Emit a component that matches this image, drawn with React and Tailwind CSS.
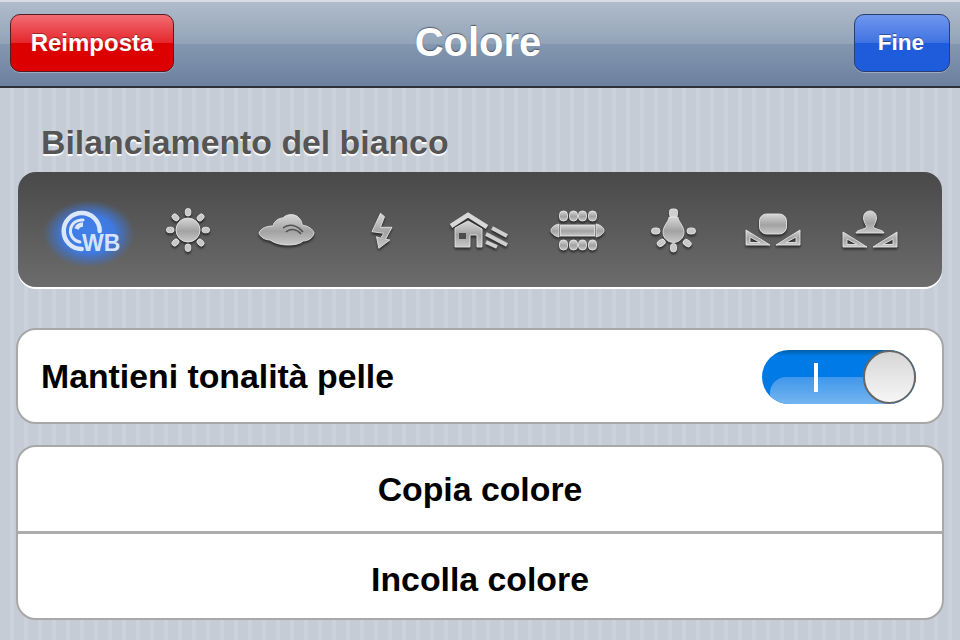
const metal = "url(#metal)";

function Icon({ children }) {
  return (
    <svg viewBox="0 0 60 60" className="w-[60px] h-[60px] overflow-visible drop-shadow-[0_2px_1px_rgba(0,0,0,0.55)]">
      <g stroke="#e4e4e4" strokeWidth="0.9">{children}</g>
    </svg>
  );
}

function WbIcon() {
  return (
    <svg viewBox="0 0 60 60" className="w-[60px] h-[60px] overflow-visible">
      <defs>
        <linearGradient id="metal" x1="0" y1="0" x2="0" y2="1">
          <stop offset="0" stopColor="#d6d6d6" />
          <stop offset="0.55" stopColor="#a2a2a2" />
          <stop offset="1" stopColor="#c8c8c8" />
        </linearGradient>
        <radialGradient id="glow">
          <stop offset="0" stopColor="#4180ea" />
          <stop offset="0.55" stopColor="#3f7ae2" />
          <stop offset="0.8" stopColor="#4272c4" stopOpacity="0.55" />
          <stop offset="1" stopColor="#4a6ea8" stopOpacity="0" />
        </radialGradient>
      </defs>
      <ellipse cx="29" cy="34" rx="46" ry="34" fill="url(#glow)" />
      <g fill="none" stroke="#dbe7fb" strokeLinecap="round">
        <path d="M39.700 31A18 18 0 1 0 21.700 49" strokeWidth="4.500" />
        <path d="M23 20A11 11 0 0 0 20 42" strokeWidth="3" />
        <path d="M23 24.500A7 7 0 0 0 16.500 29" strokeWidth="4.500" strokeLinecap="butt" />
      </g>
      <text x="22" y="50.500" fill="#d6e4fb" fontSize="23" fontWeight="700" fontFamily="'Liberation Sans', sans-serif">WB</text>
    </svg>
  );
}

function SunIcon() {
  const rays = [0, 45, 90, 135, 180, 225, 270, 315];
  return (
    <Icon>
      {rays.map((a) => (
        <rect key={a} x="27.300" y="8.500" width="5.500" height="7.500" rx="2.700" fill="#c8c8c8" transform={`rotate(${a} 30 30)`} />
      ))}
      <circle cx="30" cy="30" r="12" fill={metal} />
    </Icon>
  );
}

function CloudIcon() {
  return (
    <Icon>
      <path d="M4 33C6 28 12 26 18 26C19 21 24 18 28 18C31 14 40 13 44 18C46 20 47 22 47 25C53 26 58 29 59 33C58 38 53 41 48 41C44 46 24 47 15 40C10 40 5 37 4 33Z" fill={metal} />
      <path d="M28 28C34 23 42 25 48 32M31 32C35 28 42 29 46 34" fill="none" stroke="#4f4f4f" strokeWidth="1.500" />
    </Icon>
  );
}

function FlashIcon() {
  return (
    <Icon>
      <path d="M27.500 13.300L31.500 16.700L27.500 27.300H39L32.500 39.300L36.800 40L25.800 48.300L23.500 36.700L27.500 38.300L30.800 33.300L19 31.700Z" fill={metal} />
    </Icon>
  );
}

function HouseIcon() {
  return (
    <Icon>
      <path d="M1 26L18 15L37 27" fill="none" stroke="#d8d8d8" strokeWidth="4.500" />
      <path d="M5 28L18 21L32 29V47H27V35H20V47H5Z" fill={metal} />
      <rect x="9" y="33" width="7" height="6" fill="#4c4c4c" stroke="none" />
      <path d="M42 28L57 36M36 34L57 45M36 42L47 47" fill="none" stroke="#cfcfcf" strokeWidth="4" />
    </Icon>
  );
}

function TableIcon() {
  const xs = [15.5, 25.5, 34.5, 44.5];
  return (
    <Icon>
      {xs.map((x) => (
        <rect key={`t${x}`} x={x - 4} y="11" width="8" height="10" rx="3.800" fill={metal} />
      ))}
      {xs.map((x) => (
        <rect key={`b${x}`} x={x - 4} y="40" width="8" height="10" rx="3.800" fill={metal} />
      ))}
      <rect x="12.500" y="25" width="34" height="11" fill={metal} />
      <path d="M11 24V37C6 36 3 33 3 30.500C3 28 6 25 11 24Z" fill={metal} />
      <path d="M48 24V37C53 36 56 33 56 30.500C56 28 53 25 48 24Z" fill={metal} />
    </Icon>
  );
}

function BulbIcon() {
  return (
    <Icon>
      <rect x="24.500" y="9" width="8" height="8" rx="2.500" fill="#cfcfcf" />
      <path d="M24 17H33C33 21 39 26 39 32.500C39 38 34 42.500 28.500 42.500C23 42.500 18 38 18 32.500C18 26 24 21 24 17Z" fill={metal} />
      <rect x="6.500" y="28" width="8.500" height="6" rx="3" fill="#c8c8c8" />
      <rect x="42" y="28" width="8.500" height="6" rx="3" fill="#c8c8c8" />
      <rect x="12" y="40" width="8.500" height="6" rx="3" fill="#c8c8c8" transform="rotate(-35 16 43)" />
      <rect x="38" y="40" width="8.500" height="6" rx="3" fill="#c8c8c8" transform="rotate(35 42 43)" />
      <rect x="25.500" y="43.500" width="6" height="8.500" rx="3" fill="#c8c8c8" />
    </Icon>
  );
}

function SetSquares({ y }) {
  const b = y + 15;
  return (
    <>
      <path
        fillRule="evenodd"
        d={`M3 ${y}L27 ${b}H3ZM7 ${y + 7}V${b - 2.5}H17Z`}
        fill={metal}
      />
      <path
        fillRule="evenodd"
        d={`M57 ${y}L33 ${b}H57ZM53 ${y + 7}V${b - 2.5}H43Z`}
        fill={metal}
      />
    </>
  );
}

function LandscapeIcon() {
  return (
    <Icon>
      <rect x="16.500" y="14" width="27" height="20" rx="7" fill={metal} />
      <SetSquares y={30} />
    </Icon>
  );
}

function PortraitIcon() {
  return (
    <Icon>
      <path d="M30 11C34 11 36.500 14 36.500 18C36.500 22 33.500 25 33.500 27C33.500 29 44 30 44 33H16C16 30 26.500 29 26.500 27C26.500 25 23.500 22 23.500 18C23.500 14 26 11 30 11Z" fill={metal} />
      <SetSquares y={32} />
    </Icon>
  );
}

function Toggle() {
  return (
    <div className="relative translate-y-px w-[154px] h-[54px] rounded-full overflow-hidden bg-[linear-gradient(#005ea6_0,#007ae6_6px,#007ae6_100%)]">
      <div className="absolute left-[8px] right-0 top-[27px] bottom-0 rounded-tl-[16px] bg-[linear-gradient(#3f97eb,#74b5f0)]" />
      <div className="absolute left-[52px] top-[13px] w-[4px] h-[29px] bg-white" />
      <div className="absolute right-0 top-0 w-[53px] h-[54px] rounded-full border-2 border-[#666] bg-[linear-gradient(#d6d6d6,#f6f6f6)]" />
    </div>
  );
}

export default function App() {
  const btn = "h-[58px] rounded-[10px] border text-white font-bold flex items-center justify-center [text-shadow:0_-1px_0_rgba(0,0,0,0.35)] shadow-[0_1px_0_rgba(255,255,255,0.3)]";

  return (
    <div className="w-[960px] h-[640px] overflow-hidden font-['Liberation_Sans',Arial,sans-serif] bg-[repeating-linear-gradient(90deg,#c5ccd5_0,#c5ccd5_10px,#cbd2db_10px,#cbd2db_14px)]">
      <header className="h-[88px] px-[10px] pb-[2px] border-t-[2px] border-t-[#d9dde3] border-b-[2px] border-b-[#2e3238] grid grid-cols-[1fr_auto_1fr] items-center bg-[linear-gradient(#b0bccb_0,#93a3b8_50%,#8497b0_50%,#6c809f_100%)]">
        <button className={`${btn} w-[164px] text-[24px] justify-self-start border-[#551c20] bg-[linear-gradient(#f26c72_0,#e4262c_50%,#dd0000_50%,#dd0000_100%)]`}>
          Reimposta
        </button>
        <h1 className="text-white text-[40px] font-bold -translate-x-[2px] -translate-y-[1px] [text-shadow:0_-1px_1px_rgba(0,0,0,0.45)]">Colore</h1>
        <button className={`${btn} w-[96px] text-[22.5px] justify-self-end pr-[2px] border-[#2a3f70] bg-[linear-gradient(#7097ee_0,#3f72e0_50%,#1e5cdc_50%,#1e5cdc_100%)]`}>
          Fine
        </button>
      </header>

      <main className="px-[16px]">
        <h2 className="pt-[35px] pl-[25px] h-[84px] text-[33.8px] leading-[38px] font-bold text-[#555] [text-shadow:0_2px_1px_#fff]">
          Bilanciamento del bianco
        </h2>

        <div className="mx-[2px] h-[115px] px-[42px] rounded-[18px] flex items-center justify-between bg-[linear-gradient(#494949,#6c6c6c)] shadow-[0_2px_0_#fff]">
          <WbIcon />
          <SunIcon />
          <CloudIcon />
          <FlashIcon />
          <HouseIcon />
          <TableIcon />
          <BulbIcon />
          <LandscapeIcon />
          <PortraitIcon />
        </div>

        <div className="mt-[41px] h-[96px] pl-[23px] pr-[26px] bg-white border-2 border-[#a8a8a8] rounded-[20px] flex items-center justify-between text-[33.8px] font-bold text-black">
          <span>Mantieni tonalità pelle</span>
          <Toggle />
        </div>

        <div className="mt-[21px] h-[175px] bg-white border-2 border-[#a8a8a8] rounded-[20px] flex flex-col text-[33.8px] font-bold text-black">
          <div className="h-[87px] flex items-center justify-center border-b-[3px] border-[#adadad]">Copia colore</div>
          <div className="flex-1 pt-[7px] flex items-center justify-center">Incolla colore</div>
        </div>
      </main>
    </div>
  );
}
